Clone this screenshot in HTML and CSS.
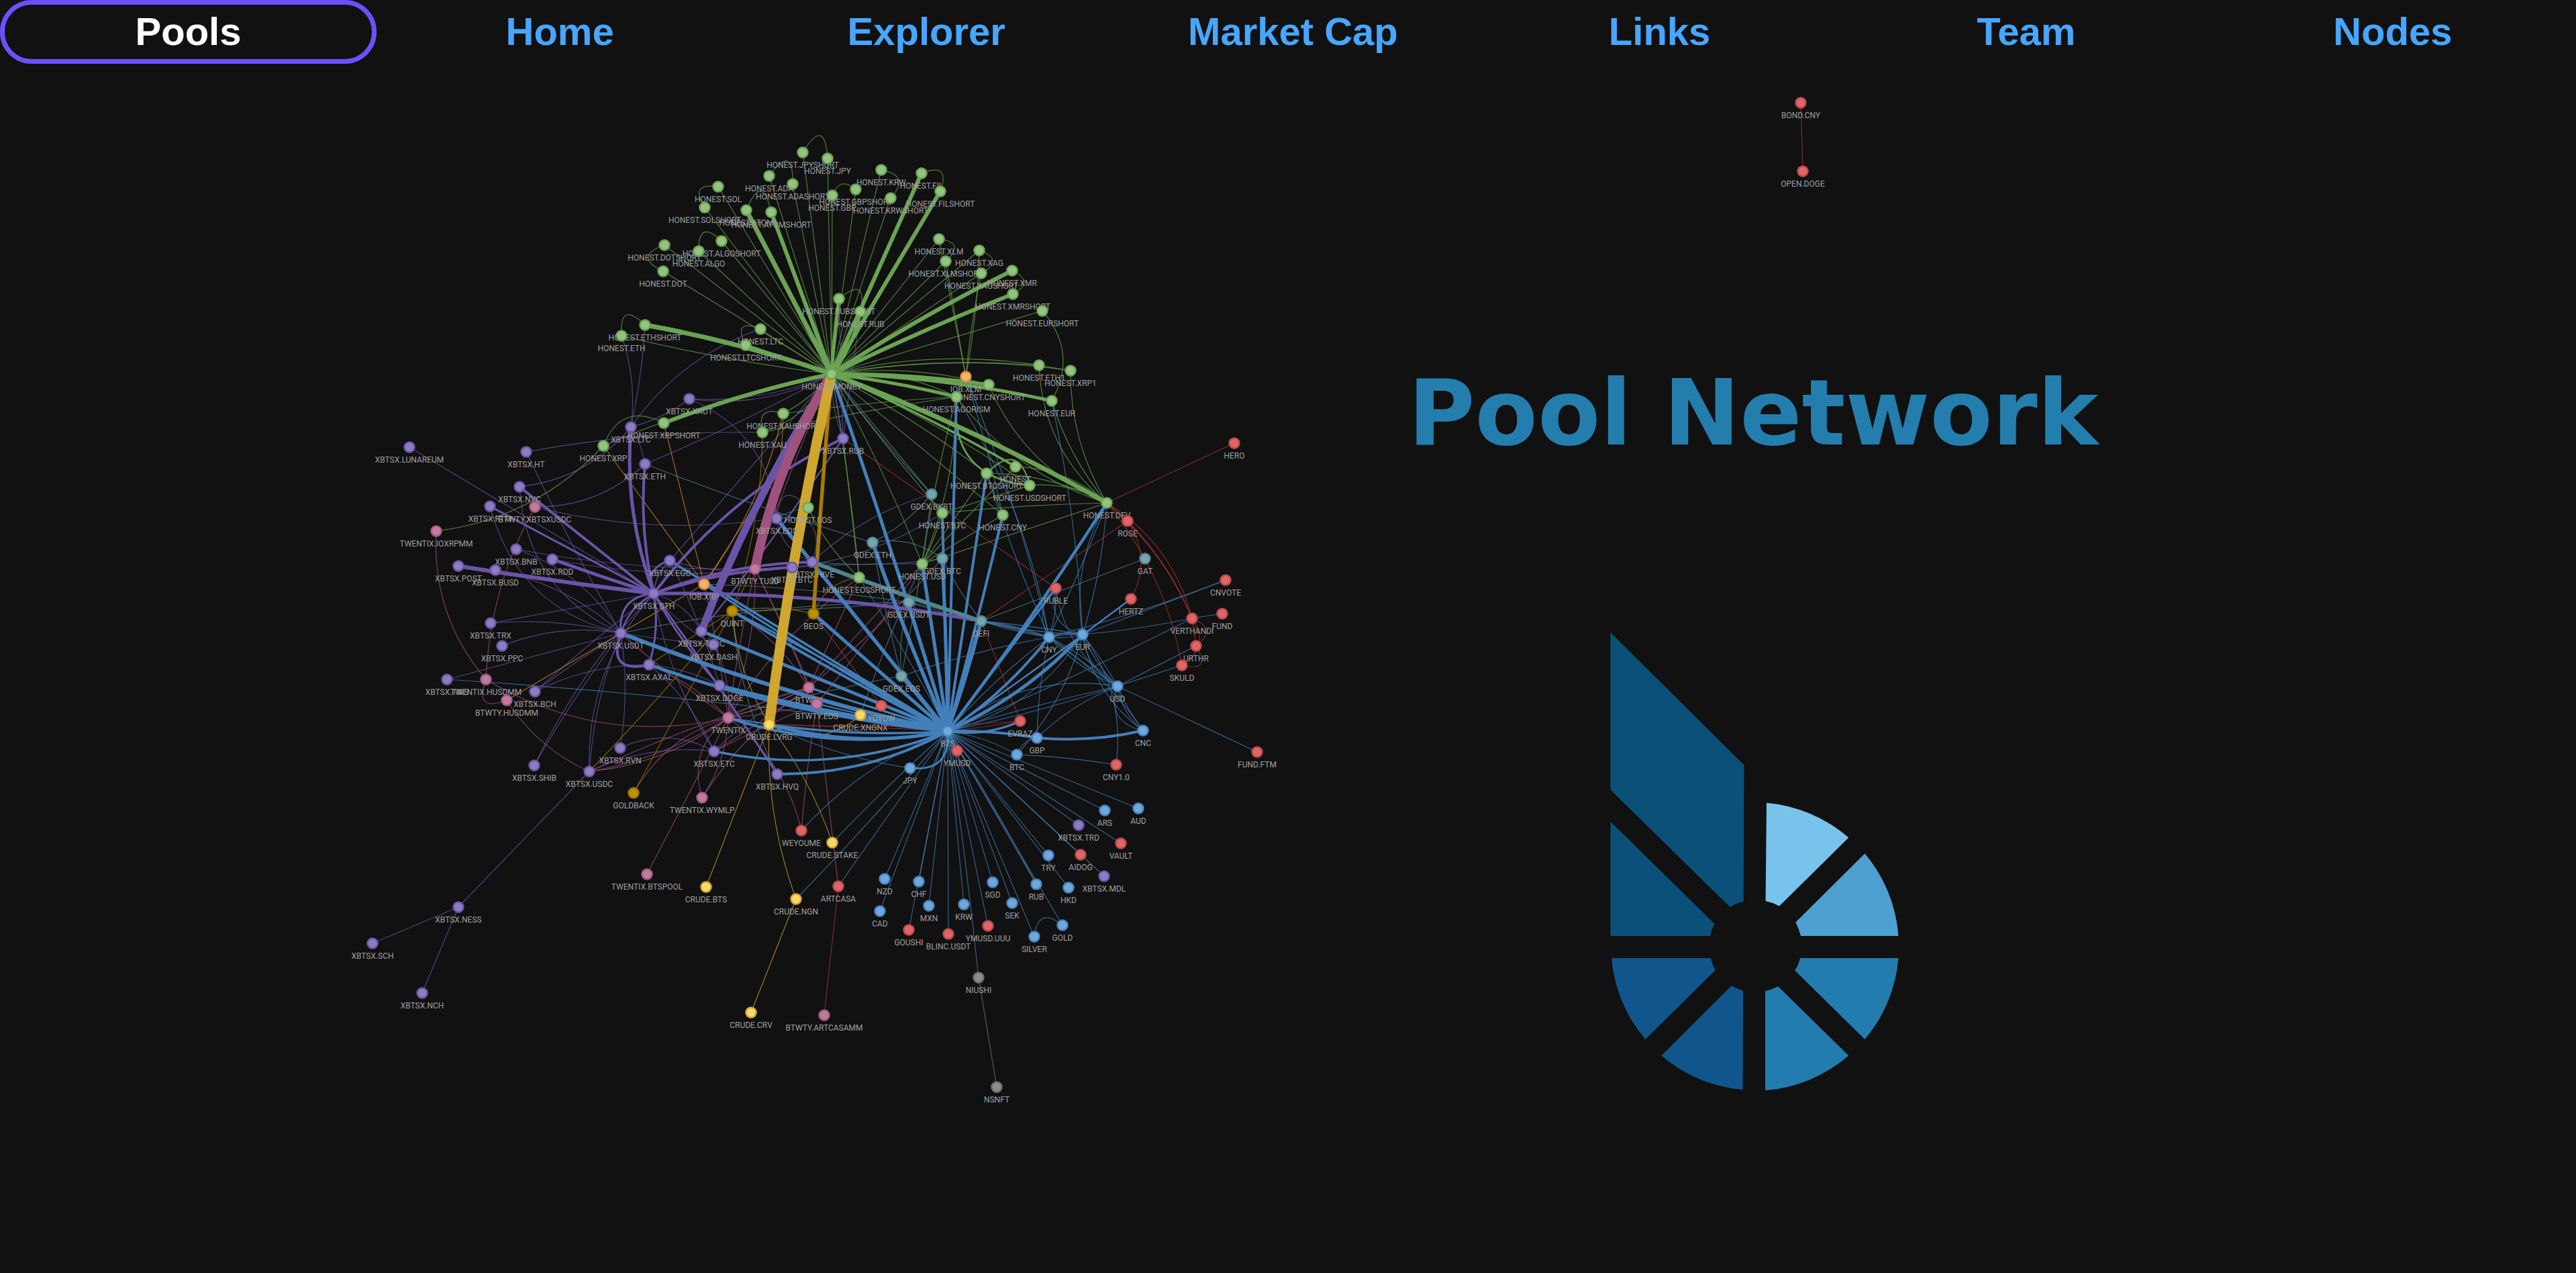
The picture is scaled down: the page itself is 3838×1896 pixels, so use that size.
FILE: index.html
```html
<!DOCTYPE html>
<html lang="en">
<head>
  <meta charset="UTF-8">
  <meta name="viewport" content="width=device-width, initial-scale=1.0">
  <title>Pool Network</title>
  <link rel="stylesheet" href="styles.css">
</head>
<body>
  <nav class="nav">
    <a class="nav-item active" href="#">Pools</a>
    <a class="nav-item" href="#">Home</a>
    <a class="nav-item" href="#">Explorer</a>
    <a class="nav-item" href="#">Market Cap</a>
    <a class="nav-item" href="#">Links</a>
    <a class="nav-item" href="#">Team</a>
    <a class="nav-item" href="#">Nodes</a>
  </nav>

  <svg id="graph" class="graph" width="3838" height="1896" xmlns="http://www.w3.org/2000/svg">
    <g id="edges"></g>
    <g id="labels"></g>
    <g id="nodes"></g>
  </svg>

  <main class="hero">
    <h1 class="hero-title">Pool Network</h1>
    <svg class="logo" width="432" height="684" viewBox="2398 940 432 684" xmlns="http://www.w3.org/2000/svg">
      <path class="logo-dark" d="M2399.5 941 L2598.5 1138.5 L2597.7 1342 Q2587 1344 2577.5 1350 L2399.5 1175.3 Z"/>
      <path class="logo-dark" d="M2399.5 1222.8 L2554.5 1375 Q2550 1383 2548 1393 L2399.5 1393 Z"/>
      <path class="logo-light" d="M2632 1194.7 A215 215 0 0 1 2754.3 1246.6 L2651 1348.4 Q2641 1343 2630.6 1341 Z"/>
      <path class="logo-mid" d="M2778.4 1270.3 A215 215 0 0 1 2828.5 1393 L2683 1393 Q2680 1382 2675.4 1372.6 Z"/>
      <path class="logo-sea" d="M2828.5 1426 A215 215 0 0 1 2778.4 1547 L2674 1444.3 Q2680 1436 2682 1426 Z"/>
      <path class="logo-sea" d="M2630 1475.3 Q2640 1473 2649 1468 L2754.3 1571.3 A215 215 0 0 1 2630 1623 Z"/>
      <path class="logo-deep" d="M2597 1474.4 Q2588 1472 2580 1467 L2475.3 1571.3 A215 215 0 0 0 2596.6 1622 Z"/>
      <path class="logo-deep" d="M2401 1426 L2549 1426 Q2551 1436 2555.6 1444 L2451.5 1547 A215 215 0 0 1 2401 1426 Z"/>
    </svg>
  </main>

  <script>
    const SVG_NS = 'http://www.w3.org/2000/svg';

    const nodes = {
      green: [
        ['HONEST.JPYSHORT', 1196, 227], ['HONEST.JPY', 1233, 236], ['HONEST.KRW', 1313, 253], ['HONEST.FIL', 1373, 258],
        ['HONEST.FILSHORT', 1401, 285], ['HONEST.ADA', 1146, 262], ['HONEST.ADASHORT', 1181, 274], ['HONEST.GBPSHORT', 1275, 282],
        ['HONEST.GBP', 1240, 291], ['HONEST.KRWSHORT', 1327, 295], ['HONEST.SOL', 1070, 278], ['HONEST.SOLSHORT', 1050, 309],
        ['HONEST.ATOM', 1112, 313], ['HONEST.ATOMSHORT', 1149, 316], ['HONEST.ALGOSHORT', 1075, 359], ['HONEST.ALGO', 1041, 374],
        ['HONEST.DOTSHORT', 990, 365], ['HONEST.DOT', 988, 404], ['HONEST.XLM', 1399, 356], ['HONEST.XAG', 1459, 373],
        ['HONEST.XLMSHORT', 1409, 389], ['HONEST.XAGSHORT', 1462, 407], ['HONEST.XMR', 1508, 403], ['HONEST.XMRSHORT', 1509, 438],
        ['HONEST.EURSHORT', 1553, 463], ['HONEST.RUBSHORT', 1250, 445], ['HONEST.RUB', 1282, 464], ['HONEST.ETHSHORT', 961, 484],
        ['HONEST.ETH', 926, 500], ['HONEST.LTC', 1133, 490], ['HONEST.LTCSHORT', 1111, 514], ['HONEST.MONEY', 1239, 557],
        ['HONEST.CNYSHORT', 1473, 573], ['HONEST.ETH1', 1548, 544], ['HONEST.XRP1', 1595, 552], ['HONEST.EUR', 1567, 597],
        ['HONEST.AGORISM', 1425, 591], ['HONEST.XAUSHORT', 1167, 616], ['HONEST.XAU', 1136, 644], ['HONEST.XRPSHORT', 989, 630],
        ['HONEST.XRP', 899, 664], ['HONEST.DEV', 1649, 749], ['HONEST', 1513, 695], ['HONEST.BTCSHORT', 1470, 705],
        ['HONEST.USDSHORT', 1534, 723], ['HONEST.BTC', 1404, 764], ['HONEST.CNY', 1494, 767], ['HONEST.USD', 1374, 840],
        ['HONEST.EOSSHORT', 1280, 860], ['HONEST.EOS', 1204, 756]
      ],
      purple: [
        ['XBTSX.XAUT', 1027, 594], ['XBTSX.LTC', 940, 636], ['XBTSX.RUB', 1256, 653], ['XBTSX.HIVE', 1210, 837],
        ['XBTSX.LUNAREUM', 610, 666], ['XBTSX.HT', 784, 673], ['XBTSX.NVC', 774, 725], ['XBTSX.RTM', 730, 754],
        ['XBTSX.BNB', 769, 818], ['XBTSX.RDD', 823, 833], ['XBTSX.POST', 683, 843], ['XBTSX.BUSD', 738, 849],
        ['XBTSX.EGC', 998, 835], ['XBTSX.STH', 974, 884], ['XBTSX.BTC', 1180, 845], ['XBTSX.EOS', 1157, 772],
        ['XBTSX.ETH', 961, 691], ['XBTSX.TRX', 731, 928], ['XBTSX.PPC', 748, 962], ['XBTSX.USDT', 925, 943],
        ['XBTSX.TUSC', 1045, 940], ['XBTSX.DASH', 1063, 960], ['XBTSX.AXAL', 967, 990], ['XBTSX.TWS', 666, 1012],
        ['XBTSX.BCH', 797, 1030], ['XBTSX.DOGE', 1072, 1021], ['XBTSX.ETC', 1064, 1119], ['XBTSX.HVQ', 1158, 1153],
        ['XBTSX.RVN', 924, 1114], ['XBTSX.SHIB', 796, 1140], ['XBTSX.USDC', 878, 1149], ['XBTSX.NESS', 683, 1351],
        ['XBTSX.SCH', 555, 1405], ['XBTSX.NCH', 629, 1479], ['XBTSX.TRD', 1607, 1229], ['XBTSX.MDL', 1645, 1305]
      ],
      blue: [
        ['BTS', 1412, 1089], ['JPY', 1356, 1144], ['CNY', 1563, 949], ['EUR', 1613, 945], ['USD', 1665, 1022],
        ['GBP', 1545, 1099], ['BTC', 1515, 1124], ['CNC', 1703, 1088], ['ARS', 1646, 1207], ['AUD', 1696, 1204],
        ['TRY', 1562, 1274], ['NZD', 1318, 1309], ['CHF', 1369, 1313], ['SGD', 1479, 1314], ['RUB', 1544, 1317],
        ['HKD', 1592, 1322], ['MXN', 1384, 1349], ['KRW', 1436, 1347], ['SEK', 1508, 1345], ['CAD', 1311, 1357],
        ['GOLD', 1583, 1378], ['SILVER', 1541, 1395]
      ],
      red: [
        ['HERO', 1839, 660], ['ROSE', 1680, 776], ['RUBLE', 1573, 876], ['HERTZ', 1685, 892], ['CNVOTE', 1826, 864],
        ['VERTHANDI', 1776, 921], ['FUND', 1821, 914], ['URTHR', 1782, 962], ['SKULD', 1761, 991], ['FUND.FTM', 1873, 1120],
        ['CNY1.0', 1663, 1139], ['EVRAZ', 1520, 1074], ['YOYOW', 1313, 1051], ['YMUSD', 1426, 1118], ['WEYOUME', 1194, 1237],
        ['VAULT', 1670, 1256], ['AIDOG', 1610, 1273], ['ARTCASA', 1249, 1320], ['GOUSHI', 1354, 1385], ['BLINC.USDT', 1413, 1391],
        ['YMUSD.UUU', 1472, 1379], ['BOND.CNY', 2683, 153], ['OPEN.DOGE', 2686, 255]
      ],
      teal: [
        ['GDEX.BKBT', 1388, 736], ['GDEX.ETH', 1300, 808], ['GDEX.BTC', 1404, 832], ['GDEX.USDT', 1354, 897],
        ['GDEX.EOS', 1343, 1007], ['GAT', 1706, 832], ['DEFI', 1462, 925]
      ],
      pink: [
        ['TWENTIX.IOXRPMM', 650, 791], ['BTWTY.XBTSXUSDC', 797, 755], ['BTWTY.TUSD', 1125, 847], ['TWENTIX.HUSDMM', 724, 1012],
        ['BTWTY.HUSDMM', 755, 1043], ['TWENTIX', 1085, 1069], ['BTWTY', 1205, 1024], ['BTWTY.EOS', 1217, 1048],
        ['TWENTIX.WYMLP', 1046, 1188], ['TWENTIX.BTSPOOL', 964, 1302], ['BTWTY.ARTCASAMM', 1228, 1512]
      ],
      yellow: [
        ['CRUDE.LVRG', 1146, 1079], ['CRUDE.XNGNX', 1282, 1065], ['CRUDE.STAKE', 1240, 1255], ['CRUDE.BTS', 1052, 1321],
        ['CRUDE.NGN', 1186, 1339], ['CRUDE.CRV', 1119, 1508]
      ],
      orange: [['IOB.XLM', 1439, 561], ['IOB.XRP', 1049, 870]],
      gold: [['QUINT', 1091, 910], ['BEOS', 1212, 914], ['GOLDBACK', 944, 1181]],
      grey: [['NIUSHI', 1458, 1456], ['NSNFT', 1485, 1619]]
    };

    // [from, to, width, bend] - short names are expanded below, bend is a share of the length
    const edges = {
      green: [
        ['M','H.ETHSHORT',7,-.04], ['M','H.LTCSHORT',4,0], ['M','H.ATOM',7,0], ['M','H.ATOMSHORT',6,0], ['M','H.FIL',6,0],
        ['M','H.FILSHORT',6,0], ['M','H.XMR',6,.03], ['M','H.XMRSHORT',6,.02], ['M','H.RUB',5,-.12], ['M','H.RUBSHORT',5,.02],
        ['H.XRPSHORT','M',6,.04], ['M','H.EUR',5,.05], ['M','H.CNYSHORT',5,.04], ['M','H.AGORISM',5,.03], ['M','H.DEV',7,.04],
        ['M','HONEST',3.5,.03], ['H.AGORISM','H.USDSHORT',2.5,-.5], ['H.BTCSHORT','H.USDSHORT',2,.9],
        ['M','H.JPYSHORT'], ['M','H.JPY'], ['M','H.ADA'], ['M','H.ADASHORT'], ['M','H.GBP'], ['M','H.GBPSHORT'], ['M','H.KRW'],
        ['M','H.KRWSHORT'], ['M','H.SOL'], ['M','H.SOLSHORT'], ['M','H.ALGO'], ['M','H.ALGOSHORT'], ['M','H.DOT'], ['M','H.DOTSHORT'],
        ['M','H.XLM'], ['M','H.XLMSHORT'], ['M','H.XAG'], ['M','H.XAGSHORT'], ['M','H.EURSHORT'], ['H.ETH','M',1.2,-.03], ['H.LTC','M',1.2,-.02],
        ['M','H.ETH1',1.2,.1], ['M','H.XRP1',1.2,.08], ['M','H.ETH1',1.2,.06], ['M','H.CNYSHORT',1.2,.1], ['M','H.AGORISM',1.2,.14],
        ['H.XAU','M',1.2,-.2], ['H.XAUSHORT','M',1.2,-.1], ['H.XRP','M',1.2,.05],
        ['M','H.BTCSHORT',1.2,.04], ['M','H.BTC',1.2,-.02], ['M','H.CNY',1.2,0], ['M','H.USD',1.2,.03], ['M','H.USDSHORT',1.2,.05],
        ['M','H.EOSSHORT',1.2,.02], ['M','H.EOS',1.2,0],
        ['H.JPYSHORT','H.JPY',1.2,1.6], ['H.ADA','H.ADASHORT',1.2,1.6], ['H.GBP','H.GBPSHORT',1.2,.7], ['H.KRW','H.KRWSHORT',1.2,.9],
        ['H.FIL','H.FILSHORT',1.2,1.1], ['H.SOLSHORT','H.SOL',1.2,1.1], ['H.ATOM','H.ATOMSHORT',1.2,1.6], ['H.ALGO','H.ALGOSHORT',1.2,1.2],
        ['H.DOT','H.DOTSHORT',1.2,1.2], ['H.XLM','H.XLMSHORT',1.2,1.1], ['H.XAG','H.XAGSHORT',1.2,1.1], ['H.XMR','H.XMRSHORT',1.2,1],
        ['H.RUBSHORT','H.RUB',1.2,1.4], ['H.ETH','H.ETHSHORT',1.2,1.3], ['H.LTCSHORT','H.LTC',1.2,1.3], ['H.XAU','H.XAUSHORT',1.2,.9],
        ['H.XRP','H.XRPSHORT',1.2,.55], ['H.EUR','H.EURSHORT',1.2,-.35], ['H.ETH1','H.XRP1'], ['H.ETH1','H.DEV',1.2,-.22],
        ['H.XRP1','H.DEV',1.2,-.14], ['H.EUR','H.DEV',1.2,-.1], ['H.CNYSHORT','H.DEV',1.2,-.2], ['H.AGORISM','H.DEV',1.2,-.16],
        ['H.BTC','H.DEV',1.2,.02], ['H.USD','H.DEV'], ['H.BTCSHORT','H.DEV',1.2,.12], ['HONEST','H.DEV',1.2,.18], ['H.USDSHORT','H.DEV',1.2,.16],
        ['H.XLM','IOB.XLM'], ['H.XLMSHORT','IOB.XLM'], ['H.XAG','IOB.XLM',1.2,.04], ['H.XAGSHORT','IOB.XLM',1.2,-.03],
        ['H.XAUSHORT','H.AGORISM',1.2,.02], ['H.XAU','H.AGORISM',1.2,.02], ['H.XRP','TWENTIX.IOXRPMM',1.2,.18],
        ['H.USD','HONEST'], ['H.USD','H.BTCSHORT'], ['H.USD','H.AGORISM',1.2,.03], ['H.BTC','H.USD',1.2,.05], ['H.BTC','H.USDSHORT'],
        ['H.CNY','H.BTCSHORT'], ['H.CNY','H.USD'], ['H.EOS','H.EOSSHORT',1.2,-.1], ['X.RUB','H.EOSSHORT'], ['H.USD','H.AGORISM',1.2,-.1]
      ],
      purple: [
        ['S','X.POST',6,.01], ['S','X.RDD',5,.01], ['S','X.NVC',4,0], ['S','X.RTM',3,0], ['X.LTC','S',5,-.11], ['X.ETH','S',4,-.08],
        ['X.EGC','S',3,-.55], ['S','X.EGC',1.8,.2], ['S','X.HIVE',4,.09], ['S','X.BTC',4,.07], ['S','DEFI',5,.05], ['S','X.RUB',4,.12],
        ['X.TUSC','M',11,.05], ['S','X.HVQ',3,.01], ['S','X.AXAL',3,.12], ['S','X.USDT',3,-.5], ['S','X.USDT',2.5,-.2], ['X.USDT','X.AXAL',4,-.9],
        ['S','X.DOGE',3,-.06], ['X.RUB','X.TUSC',2,.02],
        ['X.LTC','H.ETH',1.2,-.12], ['X.LTC','H.ETHSHORT',1.2,-.04], ['X.LTC','H.LTC',1.2,.16], ['X.ETH','M',1.2,-.03], ['X.XAUT','M',1.2,-.12],
        ['X.XAUT','M',1.2,-.16], ['X.XAUT','X.EOS',1.2,.3], ['X.RUB','H.RUB'], ['X.RUB','H.RUBSHORT'], ['X.RUB','M'], ['X.RUB','M',1.2,.1],
        ['X.LUNAREUM','S'], ['X.HT','X.USDT',1.2,-.02], ['X.BNB','X.BTC',1.2,-.06], ['X.BNB','X.USDT',1.2,.18], ['X.RDD','X.BTC',1.2,-.08],
        ['X.BUSD','X.USDT',1.2,.14], ['X.TRX','S'], ['X.TRX','X.USDT',1.2,.08], ['X.PPC','X.USDT',1.2,.14], ['X.TWS','X.USDT'], ['X.BCH','X.USDT',1.2,.02],
        ['X.BCH','S',1.2,.02], ['X.BCH','X.AXAL',1.2,.12], ['X.SHIB','X.USDT',1.2,.03], ['X.SHIB','S',1.2,.08], ['X.USDC','X.USDT',1.2,.08],
        ['X.USDC','S',1.2,.2], ['X.RVN','X.USDT',1.2,-.08], ['X.RVN','X.ETC',1.2,.25], ['X.NESS','X.USDC'], ['X.NESS','X.SCH'], ['X.NESS','X.NCH'],
        ['X.ETC','X.AXAL',1.2,-.12], ['X.NVC','X.USDT',1.2,-.3], ['X.NVC','X.LTC',1.2,-.2], ['BTWTY.XBTSXUSDC','X.ETH',1.2,-.2],
        ['BTWTY.XBTSXUSDC','X.EOS',1.2,-.1], ['X.RTM','X.USDT',1.2,-.3], ['X.XAUT','X.LTC',1.2,.1], ['X.EOS','X.HIVE',1.2,-.3], ['X.EOS','X.HIVE',1.2,.8],
        ['X.EOS','H.EOS',1.2,1.1], ['X.HIVE','GDEX.BKBT',1.2,.12], ['X.BTC','H.BTC',1.2,-.12], ['X.BTC','H.USD',1.2,.02], ['X.DOGE','X.AXAL',1.2,-.1],
        ['X.EGC','X.BTC',1.2,-.12], ['X.EGC','M'], ['X.EGC','X.DOGE',1.2,.05], ['X.DASH','X.USDT',1.2,.02], ['X.DASH','S',1.2,.1], ['X.TUSC','S',1.2,-.2],
        ['X.ETC','S',1.2,.1], ['X.ETC','X.USDC',1.2,-.14], ['X.ETC','BTWTY',1.2,.1], ['X.LTC','X.ETH',1.2,.1], ['X.HT','H.XAU',1.2,.05]
      ],
      blue: [
        ['X.USDT','B',6,-.04], ['X.AXAL','B',5,-.06], ['X.DOGE','B',5,-.03], ['TWENTIX','B',4,-.13], ['CRUDE.LVRG','B',5,-.12],
        ['CRUDE.LVRG','B',2,-.06], ['TWENTIX','B',2,-.06], ['X.TUSC','B',5,0], ['X.EGC','B',3.5,0], ['IOB.XRP','B',3,-.02], ['QUINT','B',4,-.02],
        ['QUINT','B',3,.02], ['X.EOS','B',5.5,0], ['BEOS','B',5,0], ['BTWTY','B',3,0], ['BTWTY.EOS','B',2,-.02], ['GDEX.ETH','B',5.5,-.02],
        ['GDEX.USDT','B',3.5,0], ['GDEX.EOS','B',5,0], ['H.USD','B',5,0], ['GDEX.BTC','B',5,.01], ['H.BTC','B',4,0], ['H.AGORISM','B',4,0],
        ['M','B',5,.01], ['H.BTCSHORT','B',4,0], ['H.CNY','B',4,.01], ['DEFI','B',5.5,.01], ['DEFI','B',4,.03], ['H.DEV','B',4.5,.02],
        ['CNY','B',4,.08], ['EUR','B',5,.1], ['RUBLE','B',3.5,0], ['HERTZ','B',2.5,.01], ['GBP','B',4,-.05], ['GBP','CNC',4,-.08], ['EVRAZ','B',3.5,.15],
        ['JPY','B',3,-.6], ['X.HVQ','B',4,-.13], ['X.ETC','B',3.5,-.15], ['X.TWS','B',1.2,.02],
        ['B','NZD'], ['B','CHF'], ['B','SGD'], ['B','RUB'], ['B','HKD'], ['B','MXN'], ['B','KRW'], ['B','SEK'], ['B','CAD'], ['B','GOLD'],
        ['B','YMUSD.UUU'], ['B','GOUSHI'], ['B','BLINC.USDT'], ['B','SILVER'], ['B','NIUSHI',1.2,.01], ['B','ARS'], ['B','AUD'], ['B','X.TRD'],
        ['B','VAULT'], ['B','TRY'], ['B','AIDOG'], ['B','X.MDL'], ['B','ARTCASA'], ['B','CRUDE.STAKE',1.2,-.02], ['B','CRUDE.NGN',1.2,.02],
        ['B','WEYOUME',1.2,-.12], ['B','YMUSD'], ['B','RUB',1.2,.02], ['JPY','CRUDE.LVRG',1.2,.08], ['GOLD','SILVER',1.2,-.9],
        ['DEFI','CNY',1.5,.06], ['DEFI','CNY',1.5,-.04], ['DEFI','CNY',1.5,.01], ['DEFI','EUR',1.5,.02], ['DEFI','EUR',1.5,-.05],
        ['CNY','EUR',1.2,.18], ['CNY','EUR',1.2,.05], ['CNY','EUR',1.2,-.1], ['CNY','USD',1.2,.08], ['CNY','USD',1.2,-.02], ['CNY','USD',1.2,-.1],
        ['EUR','USD',1.2,-.26], ['EUR','USD',1.2,-.1], ['EUR','USD',1.2,.04], ['USD','CNC',1.2,-.2], ['USD','CNC',1.2,-.07], ['USD','CNC',1.2,-.55], ['EUR','CNC',1.2,-.2],
        ['RUBLE','CNY',1.2,-.4], ['RUBLE','CNY',1.2,.1], ['RUBLE','EUR',1.2,-.5], ['RUBLE','USD',1.2,-.22], ['H.DEV','EUR',1.2,.06], ['H.DEV','EUR',1.2,-.18],
        ['H.DEV','CNY',1.2,.02], ['H.EUR','EUR',1.2,.04], ['IOB.XLM','CNY',1.2,.04], ['IOB.XLM','H.CNY',1.2,.02], ['H.AGORISM','CNY',1.2,.1],
        ['CNVOTE','CNY',1.2,.03], ['CNVOTE','EUR'], ['FUND','VERTHANDI'], ['VERTHANDI','EUR',1.2,.03], ['VERTHANDI','B',1.2,.02], ['SKULD','USD'], ['URTHR','USD'],
        ['USD','FUND.FTM'], ['USD','B',1.2,.03], ['USD','B',1.2,-.02], ['USD','B',1.2,-.22], ['CNC','CNY',1.2,-.1], ['CNY1.0','EUR',1.2,-.2], ['CNY1.0','BTC',1.2,-.03],
        ['BTC','GBP',1.2,.3], ['BTC','B',1.2,-.1], ['USD','GBP',1.2,-.1], ['EUR','B',1.2,.2], ['CNY','B',1.2,-.05], ['EUR','BTC',1.2,.12], ['H.EOS','X.EOS',1.2,-.1],
        ['GBP','CNY',1.2,.05], ['CRUDE.XNGNX','H.USD',1.2,.03], ['H.EOSSHORT','B',1.2,.02], ['CNY','GDEX.EOS',1.2,-.04], ['H.BTCSHORT','CNY',1.2,-.03]
      ],
      red: [
        ['X.RUB','RUBLE'], ['ROSE','DEFI'], ['H.DEV','HERO'], ['H.DEV','ROSE'], ['H.DEV','VERTHANDI',1.2,.12], ['H.DEV','VERTHANDI',1.2,.2],
        ['ROSE','VERTHANDI',1.2,.1], ['H.DEV','SKULD',1.2,.13], ['ROSE','HERTZ',1.2,.3], ['VERTHANDI','URTHR'], ['VERTHANDI','URTHR',1.2,.9],
        ['URTHR','SKULD',1.2,1.2], ['VERTHANDI','SKULD',1.2,.5], ['B','EVRAZ',1.2,-.02], ['BEOS','YOYOW'], ['DEFI','EVRAZ'],
        ['CRUDE.LVRG','EVRAZ',1.2,-.03], ['ARTCASA','BTWTY.ARTCASAMM'], ['BOND.CNY','OPEN.DOGE'], ['CRUDE.LVRG','B',1.2,.01]
      ],
      teal: [
        ['X.HIVE','DEFI',6,-.01], ['GAT','DEFI'], ['X.ETH','GDEX.ETH',1.2,-.02], ['GDEX.USDT','DEFI',1.2,.03], ['GDEX.USDT','DEFI',1.2,-.03],
        ['GDEX.BTC','X.HIVE',1.2,.06], ['GDEX.ETH','GDEX.BTC',1.2,.22], ['X.USDT','GDEX.USDT',1.2,.05], ['GDEX.BKBT','M'], ['GDEX.BKBT','M',1.2,.03],
        ['GDEX.BKBT','GDEX.EOS',1.2,.02], ['GDEX.BKBT','GDEX.ETH',1.2,.1], ['GDEX.ETH','GDEX.EOS',1.2,-.02], ['IOB.XRP','GDEX.USDT',1.2,.03],
        ['GDEX.USDT','QUINT',1.2,.02], ['GDEX.USDT','GDEX.EOS',1.2,-.1], ['GDEX.BTC','DEFI',1.2,-.05], ['QUINT','X.HVQ',1.2,-.1], ['TWENTIX','GDEX.EOS',1.2,.03]
      ],
      pink: [
        ['M','BTWTY.TUSD',14,-.09], ['TWENTIX.HUSDMM','TWENTIX',1.2,-.2], ['TWENTIX.IOXRPMM','TWENTIX.HUSDMM',1.2,-.2], ['TWENTIX.HUSDMM','BTWTY.HUSDMM',1.2,-1.1],
        ['BTWTY.HUSDMM','X.USDC',1.2,-.15], ['BTWTY.XBTSXUSDC','TWENTIX.HUSDMM',1.2,-.12], ['X.USDC','TWENTIX',1.2,-.1], ['X.USDC','TWENTIX',1.2,-.14],
        ['BTWTY','TWENTIX',1.2,.04], ['BTWTY.EOS','TWENTIX',1.2,.04], ['BTWTY','TWENTIX',1.2,-.06], ['BTWTY.TUSD','BTWTY',1.2,.02], ['BTWTY.TUSD','BTWTY.EOS',1.2,.02],
        ['BTWTY.TUSD','TWENTIX',1.2,.1], ['BTWTY.TUSD','TWENTIX',1.2,-.02], ['GOLDBACK','TWENTIX',1.2,.2], ['TWENTIX.WYMLP','TWENTIX',1.2,.35], ['TWENTIX.WYMLP','TWENTIX',1.2,-.14],
        ['TWENTIX.WYMLP','BTWTY',1.2,.1], ['WEYOUME','TWENTIX',1.2,-.18], ['WEYOUME','BTWTY.EOS',1.2,.02], ['TWENTIX.BTSPOOL','TWENTIX'], ['BTWTY.EOS','ARTCASA'],
        ['M','BTWTY.TUSD',1.2,-.02], ['H.USD','BTWTY'], ['H.USD','BTWTY.EOS',1.2,.02], ['H.EOSSHORT','BTWTY'], ['H.EOSSHORT','TWENTIX',1.2,-.1],
        ['X.ETC','BTWTY',1.2,-.02], ['X.ETC','BTWTY.EOS',1.2,.02], ['X.USDC','BTWTY',1.2,.03], ['X.USDT','TWENTIX',1.2,-.03], ['BTWTY','GDEX.BTC',1.2,-.04],
        ['IOB.XRP','TWENTIX',1.2,.02], ['X.AXAL','TWENTIX',1.2,.1], ['X.DASH','TWENTIX',1.2,.15], ['QUINT','BTWTY',1.2,.12]
      ],
      yellow: [
        ['CRUDE.LVRG','M',15,.023], ['CRUDE.LVRG','CRUDE.STAKE',1.2,.08], ['CRUDE.LVRG','CRUDE.NGN',1.2,-.1], ['CRUDE.LVRG','CRUDE.BTS'],
        ['CRUDE.NGN','CRUDE.CRV'], ['CRUDE.XNGNX','CRUDE.LVRG',1.2,.35], ['QUINT','CRUDE.LVRG',1.2,-.12]
      ],
      gold: [
        ['BEOS','M',5.5,.005], ['QUINT','BEOS',1.2,.1], ['BEOS','H.EOSSHORT',1.2,.3], ['QUINT','GOLDBACK'], ['QUINT','X.USDC',1.2,.02], ['QUINT','X.AXAL'],
        ['H.XAU','QUINT',1.2,.08], ['H.XAUSHORT','QUINT',1.2,.12]
      ],
      orange: [
        ['IOB.XRP','H.XRP'], ['IOB.XRP','H.XRPSHORT'], ['IOB.XRP','H.XAUSHORT',1.2,-.1], ['IOB.XRP','BTWTY.HUSDMM'], ['IOB.XRP','M',1.2,-.02]
      ],
      grey: [['NIUSHI', 'NSNFT']]
    };

    function fullName(short) {
      if (short === 'M') return 'HONEST.MONEY';
      if (short === 'S') return 'XBTSX.STH';
      if (short === 'B') return 'BTS';
      return short.replace(/^H\./, 'HONEST.').replace(/^X\./, 'XBTSX.');
    }

    function make(tag, attrs, parent) {
      const el = document.createElementNS(SVG_NS, tag);
      Object.keys(attrs).forEach(key => el.setAttribute(key, attrs[key]));
      parent.appendChild(el);
      return el;
    }

    const places = {};
    Object.keys(nodes).forEach(group => {
      nodes[group].forEach(([name, x, y]) => {
        places[name] = [x, y];
        const label = make('text', { class: 'node-label', x: x, y: y + 23 }, document.getElementById('labels'));
        label.textContent = name;
        make('circle', { class: `node node-${group}`, cx: x, cy: y, r: 7.5 }, document.getElementById('nodes'));
      });
    });

    const allEdges = [];
    Object.keys(edges).forEach(group => {
      edges[group].forEach(([from, to, width = 1.2, bend = 0]) => {
        allEdges.push({ group, from: places[fullName(from)], to: places[fullName(to)], width, bend });
      });
    });
    allEdges.sort((a, b) => a.width - b.width);

    allEdges.forEach(edge => {
      const [x1, y1] = edge.from;
      const [x2, y2] = edge.to;
      const cx = (x1 + x2) / 2 + edge.bend * (y2 - y1);
      const cy = (y1 + y2) / 2 - edge.bend * (x2 - x1);
      make('path', {
        class: `edge edge-${edge.group}${edge.width < 2 ? ' edge-thin' : ''}`,
        d: `M${x1} ${y1} Q${cx} ${cy} ${x2} ${y2}`,
        'stroke-width': edge.width
      }, document.getElementById('edges'));
    });
  </script>
</body>
</html>
```

FILE: styles.css
```css
body {
  margin: 0;
  height: 1896px;
  overflow: hidden;
  position: relative;
  background-color: #111111;
  font-family: "Liberation Sans", Arial, sans-serif;
}

.nav {
  display: flex;
  height: 95px;
  position: relative;
  z-index: 1;
}
.nav-item {
  flex: 1;
  display: flex;
  align-items: center;
  justify-content: center;
  padding-bottom: 2px;
  box-sizing: border-box;
  font-size: 58px;
  font-weight: bold;
  color: #47a6ff;
  text-decoration: none;
}
.nav-item.active {
  flex: 0 0 561px;
  color: #ffffff;
  border: 7px solid #6a50ff;
  border-radius: 47px / 47px;
}

.graph {
  position: absolute;
  top: 0;
  left: 0;
}
.edge {
  fill: none;
  stroke-linecap: butt;
}
.edge-thin {
  opacity: 0.72;
}
.edge-green { stroke: #6aa353; }
.edge-purple { stroke: #6a54a8; }
.edge-blue { stroke: #437fba; }
.edge-red { stroke: #a83434; }
.edge-teal { stroke: #4f8590; }
.edge-pink { stroke: #9e527d; }
.edge-yellow { stroke: #cfa630; }
.edge-gold { stroke: #a67c00; }
.edge-orange { stroke: #d98c3a; }
.edge-grey { stroke: #777777; }

.node {
  stroke-width: 2.5;
}
.node-green { fill: #93c47d; stroke: #6fa35c; }
.node-purple { fill: #8e7cc3; stroke: #6a57a6; }
.node-blue { fill: #6fa8dc; stroke: #4a86c0; }
.node-red { fill: #e06666; stroke: #bb4a4f; }
.node-teal { fill: #76a5af; stroke: #588790; }
.node-pink { fill: #c27ba0; stroke: #a45c82; }
.node-yellow { fill: #ffd966; stroke: #d3a93e; }
.node-orange { fill: #f6b26b; stroke: #d48d45; }
.node-gold { fill: #bf9000; stroke: #9c7600; }
.node-grey { fill: #8c8c8c; stroke: #6e6e6e; }

.node-label {
  font-family: Roboto, "Liberation Sans", sans-serif;
  font-size: 12px;
  fill: #a0a0a0;
  text-anchor: middle;
}

.hero {
  position: relative;
  margin-left: 1392px;
  width: 2440px;
  display: flex;
  flex-direction: column;
  align-items: center;
}
.hero-title {
  margin: 440px 0 0;
  height: 406px;
  line-height: 160px;
  font-family: "DejaVu Sans", sans-serif;
  font-size: 136px;
  font-weight: bold;
  color: #237eae;
}
.logo {
  display: block;
  margin-left: 4px;
}
.logo-dark { fill: #0b5079; }
.logo-light { fill: #78c3ec; }
.logo-mid { fill: #4fa0d2; }
.logo-sea { fill: #227cad; }
.logo-deep { fill: #10568c; }
```
